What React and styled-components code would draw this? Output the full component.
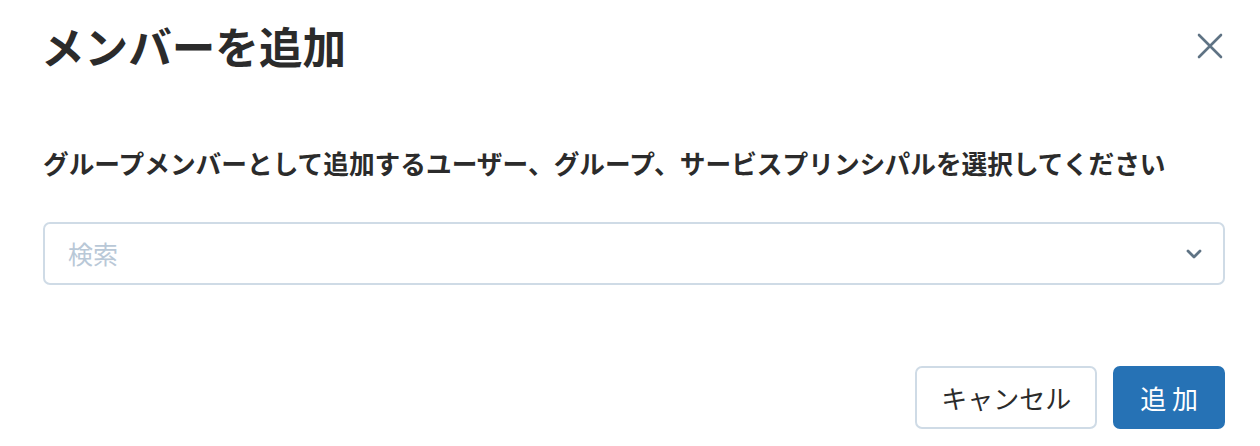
import React from "react";
import styled, { createGlobalStyle } from "styled-components";

const Global = createGlobalStyle`
  html, body { margin: 0; padding: 0; background: #ffffff; }
  body { font-family: "Noto Sans CJK JP", "Noto Sans", sans-serif; }
  * { box-sizing: border-box; }
`;

const Dialog = styled.div`
  width: 1260px;
  height: 446px;
  padding: 0 35px 0 43px;
  display: flex;
  flex-direction: column;
  background: #fff;
`;

const Header = styled.div`
  height: 92px;
  display: flex;
  align-items: center;
  justify-content: space-between;
`;

const Title = styled.h1`
  margin: -2px 0 0 -2px;
  font-size: 43.6px;
  line-height: 56px;
  font-weight: 700;
  color: #2b2b2b;
`;

const CloseButton = styled.button`
  border: 0;
  background: transparent;
  padding: 0;
  width: 30px;
  height: 30px;
  display: flex;
  align-items: center;
  justify-content: center;
  margin-top: -1px;
  cursor: pointer;
`;

const Description = styled.p`
  margin: 51px 0 0;
  font-size: 25.7px;
  line-height: 40px;
  font-weight: 700;
  color: #2b2b2b;
`;

const Select = styled.div`
  margin-top: 39px;
  height: 63px;
  border: 2px solid #cfdbe6;
  border-radius: 7px;
  display: flex;
  align-items: center;
  justify-content: space-between;
  padding: 0 21px 0 23px;
`;

const Placeholder = styled.span`
  font-size: 25px;
  color: #b9c8d7;
  line-height: 1;
`;

const Footer = styled.div`
  margin-top: 81px;
  display: flex;
  justify-content: flex-end;
  gap: 16px;
`;

const Button = styled.button`
  height: 63px;
  padding: 0 ${(p) => (p.$primary ? "25px" : "24px")};
  border-radius: 7px;
  border: 2px solid ${(p) => (p.$primary ? "#2672b5" : "#cfdbe6")};
  background: ${(p) => (p.$primary ? "#2672b5" : "#ffffff")};
  color: ${(p) => (p.$primary ? "#ffffff" : "#2b2b2b")};
  font-family: "Noto Sans CJK JP", "Noto Sans", sans-serif;
  font-size: 26px;
  font-weight: 400;
  cursor: pointer;
`;

export default function App() {
  return (
    <>
      <Global />
      <Dialog>
        <Header>
          <Title>メンバーを追加</Title>
          <CloseButton aria-label="close">
            <svg width="26" height="26" viewBox="0 0 26 26">
              <path d="M2 2 L24 24 M24 2 L2 24" stroke="#5f7384" strokeWidth="2.6" strokeLinecap="round" fill="none" />
            </svg>
          </CloseButton>
        </Header>
        <Description>
          グループメンバーとして追加するユーザー、グループ、サービスプリンシパルを選択してください
        </Description>
        <Select>
          <Placeholder>検索</Placeholder>
          <svg width="16" height="12" viewBox="0 0 16 12">
            <path d="M2 3 L8 9 L14 3" stroke="#5f7384" strokeWidth="2.8" strokeLinecap="round" strokeLinejoin="round" fill="none" />
          </svg>
        </Select>
        <Footer>
          <Button>キャンセル</Button>
          <Button $primary>追 加</Button>
        </Footer>
      </Dialog>
    </>
  );
}
